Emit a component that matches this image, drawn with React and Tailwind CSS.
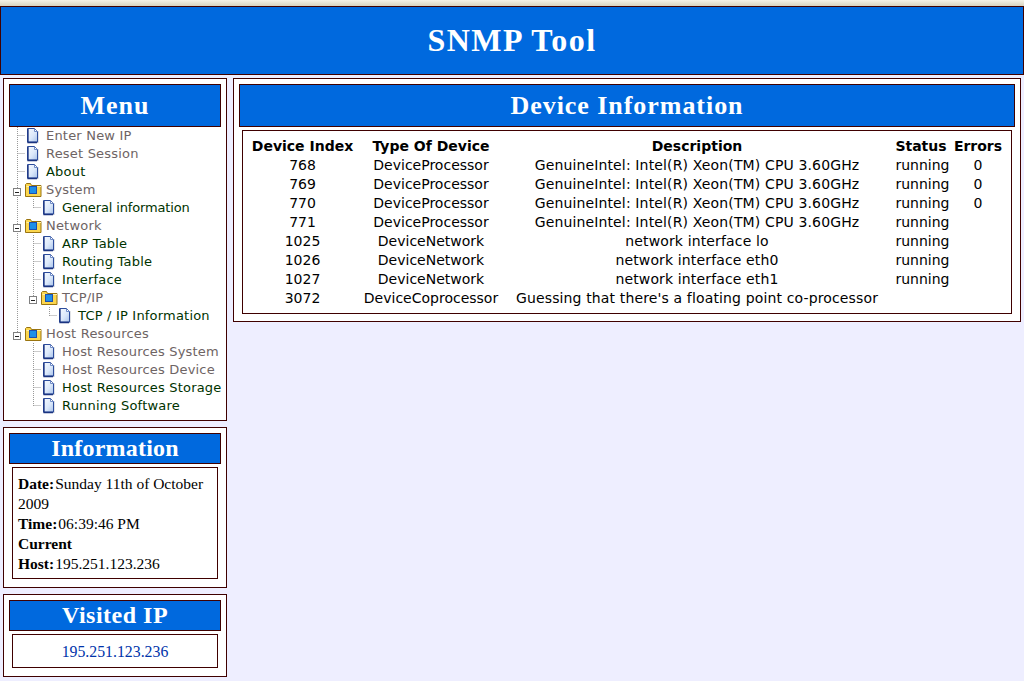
import React from 'react';

const serif = 'font-["Liberation_Serif",serif]';
const sans = 'font-["DejaVu_Sans",sans-serif]';

const PageIcon = () => (
  <svg width="16" height="18" viewBox="0 0 16 18" className="block shrink-0">
    <defs>
      <linearGradient id="pageFill" x1="0" y1="0" x2="1" y2="1">
        <stop offset="0" stopColor="#f6faff" />
        <stop offset="0.55" stopColor="#dbe8fa" />
        <stop offset="1" stopColor="#a9c3ea" />
      </linearGradient>
    </defs>
    <path d="M4 4h9.500v12H4z" fill="#c3c7ce" />
    <path d="M2.500 1.500h7l3 3v10.500h-10z" fill="url(#pageFill)" stroke="#2c4c9c" />
    <path d="M3 2v13.500h9" fill="none" stroke="#1a3380" strokeWidth="1.300" />
    <path d="M9.500 2v2.500h3" fill="#fff" stroke="#6f8cc8" />
  </svg>
);

const FolderIcon = () => (
  <svg width="18" height="18" viewBox="0 0 18 18" className="block shrink-0">
    <path d="M0.500 15.500v-12l1-1h4l1 2h9.500v11z" fill="#fbd64e" stroke="#9a7410" />
    <path d="M1.500 5.500h14.500" stroke="#fff0a8" />
    <rect x="4.500" y="5.500" width="7" height="7" fill="#1f8fe8" stroke="#1d4fb0" />
  </svg>
);

// one 16px column of the tree: dotted guide, branch and maybe the minus box
const Cell = ({ type }) => (
  <svg width="16" height="18" viewBox="0 0 16 18" className="block shrink-0">
    {(type === 'line' || type === 'tee' || type === 'minus') && (
      <path d="M8.500 0v18" stroke="#999" strokeDasharray="1 1" />
    )}
    {(type === 'end' || type === 'minusEnd') && (
      <path d="M8.500 0v9" stroke="#999" strokeDasharray="1 1" />
    )}
    {(type === 'tee' || type === 'end') && (
      <path d="M8.500 8.500h8" stroke="#999" strokeDasharray="1 1" />
    )}
    {(type === 'minus' || type === 'minusEnd') && (
      <g>
        <rect x="4.500" y="7.500" width="7" height="7" fill="#fff" stroke="#808080" />
        <path d="M6 11.500h4" stroke="#222" />
      </g>
    )}
  </svg>
);

const treeRows = [
  { cells: ['tee'], label: 'Enter New IP', seen: true },
  { cells: ['tee'], label: 'Reset Session', seen: true },
  { cells: ['tee'], label: 'About' },
  { cells: ['minus'], label: 'System', folder: true, seen: true },
  { cells: ['line', 'end'], label: 'General information', tight: true },
  { cells: ['minus'], label: 'Network', folder: true, seen: true },
  { cells: ['line', 'tee'], label: 'ARP Table' },
  { cells: ['line', 'tee'], label: 'Routing Table' },
  { cells: ['line', 'tee'], label: 'Interface' },
  { cells: ['line', 'minusEnd'], label: 'TCP/IP', folder: true, seen: true },
  { cells: ['line', 'none', 'end'], label: 'TCP / IP Information' },
  { cells: ['minusEnd'], label: 'Host Resources', folder: true, seen: true },
  { cells: ['none', 'tee'], label: 'Host Resources System', seen: true },
  { cells: ['none', 'tee'], label: 'Host Resources Device', seen: true },
  { cells: ['none', 'tee'], label: 'Host Resources Storage' },
  { cells: ['none', 'end'], label: 'Running Software' },
];

const devices = [
  ['768', 'DeviceProcessor', 'GenuineIntel: Intel(R) Xeon(TM) CPU 3.60GHz', 'running', '0'],
  ['769', 'DeviceProcessor', 'GenuineIntel: Intel(R) Xeon(TM) CPU 3.60GHz', 'running', '0'],
  ['770', 'DeviceProcessor', 'GenuineIntel: Intel(R) Xeon(TM) CPU 3.60GHz', 'running', '0'],
  ['771', 'DeviceProcessor', 'GenuineIntel: Intel(R) Xeon(TM) CPU 3.60GHz', 'running', ''],
  ['1025', 'DeviceNetwork', 'network interface lo', 'running', ''],
  ['1026', 'DeviceNetwork', 'network interface eth0', 'running', ''],
  ['1027', 'DeviceNetwork', 'network interface eth1', 'running', ''],
  ['3072', 'DeviceCoprocessor', "Guessing that there's a floating point co-processor", '', ''],
];

const Title = ({ children, className }) => (
  <h2 className={`flex items-center justify-center bg-[#0069de] border border-[#3f0000] text-white font-bold ${serif} ${className}`}>
    {children}
  </h2>
);

const App = () => (
  <div className="w-[1024px] h-[681px] overflow-hidden bg-[#eeeeff]">
    <div className="h-[6px] bg-gradient-to-b from-[#f4f2e8] to-[#d8d4c0]" />
    <header className={`h-[69px] pb-[2px] flex items-center justify-center bg-[#0069de] border border-[#3f0000] text-white font-bold text-[32px] tracking-[1.5px] ${serif}`}>
      SNMP Tool
    </header>

    <div className="flex gap-[6px] pt-[3px] pl-[3px] pr-[3px] items-start">
      <aside className="w-[224px] shrink-0 flex flex-col gap-[6px]">
        <section className="h-[343px] bg-white border border-[#3f0000] pt-[5px]">
          <Title className="h-[43px] mx-[5px] text-[26px] tracking-[1px]">Menu</Title>
          <nav className={`pl-[5px] text-[13px] tracking-[0.2px] ${sans}`}>
            {treeRows.map(row => (
              <div key={row.label} className="flex items-center h-[18px] whitespace-nowrap">
                {row.cells.map((c, i) => <Cell key={i} type={c} />)}
                {row.folder ? <FolderIcon /> : <PageIcon />}
                <a className={`${row.folder ? 'ml-[3px]' : 'ml-[5px]'} ${row.seen ? 'text-[#6e6464]' : 'text-[#003300]'} ${row.tight ? 'tracking-[-0.15px]' : ''}`}>
                  {row.label}
                </a>
              </div>
            ))}
          </nav>
        </section>

        <section className="h-[161px] bg-white border border-[#3f0000] pt-[5px]">
          <Title className="h-[31px] pb-[2px] mx-[5px] text-[24px] tracking-[0.2px]">Information</Title>
          <div className={`mt-[3px] mx-[8px] h-[112px] border border-[#3f0000] px-[5px] pt-[6px] text-[15.5px] leading-[20px] text-black ${serif}`}>
            <div><b className="mr-[1px]">Date:</b><span>Sunday 11th of October</span></div>
            <div>2009</div>
            <div><b className="mr-[1px]">Time:</b><span>06:39:46 PM</span></div>
            <div><b>Current</b></div>
            <div><b className="mr-[1px]">Host:</b><span>195.251.123.236</span></div>
          </div>
        </section>

        <section className="h-[83px] bg-white border border-[#3f0000] pt-[5px]">
          <Title className="h-[31px] pb-[2px] mx-[5px] text-[24px] tracking-[0.5px]">Visited IP</Title>
          <div className={`mt-[3px] mx-[8px] h-[34px] pt-[1px] flex items-center justify-center border border-[#3f0000] text-[15.8px] text-[#0033aa] ${serif}`}>
            195.251.123.236
          </div>
        </section>
      </aside>

      <main className="w-[788px] h-[244px] bg-white border border-[#3f0000] pt-[5px]">
        <Title className="h-[43px] mx-[5px] text-[26px] tracking-[0.95px]">Device Information</Title>
        <div className="mt-[3px] mx-[8px] h-[184px] border border-[#3f0000] pt-[6px] pl-[4px]">
          <table className={`table-fixed w-[757px] text-[14px] leading-[19px] text-black text-center ${sans}`}>
            <colgroup>
              <col className="w-[111px]" />
              <col className="w-[146px]" />
              <col className="w-[386px]" />
              <col className="w-[62px]" />
              <col className="w-[52px]" />
            </colgroup>
            <thead>
              <tr>
                <th className="p-0 h-[19px] whitespace-nowrap">Device Index</th>
                <th className="p-0 h-[19px] whitespace-nowrap">Type Of Device</th>
                <th className="p-0 h-[19px] whitespace-nowrap">Description</th>
                <th className="p-0 h-[19px] whitespace-nowrap">Status</th>
                <th className="p-0 h-[19px] whitespace-nowrap">Errors</th>
              </tr>
            </thead>
            <tbody>
              {devices.map(d => (
                <tr key={d[0]}>
                  <td className="p-0 h-[19px] whitespace-nowrap">{d[0]}</td>
                  <td className="p-0 h-[19px] whitespace-nowrap">{d[1]}</td>
                  <td className="p-0 h-[19px] whitespace-nowrap tracking-[0.14px]">{d[2]}</td>
                  <td className="p-0 pl-[3px] h-[19px] whitespace-nowrap">{d[3]}</td>
                  <td className="p-0 h-[19px] whitespace-nowrap">{d[4]}</td>
                </tr>
              ))}
            </tbody>
          </table>
        </div>
      </main>
    </div>
  </div>
);

export default App;
